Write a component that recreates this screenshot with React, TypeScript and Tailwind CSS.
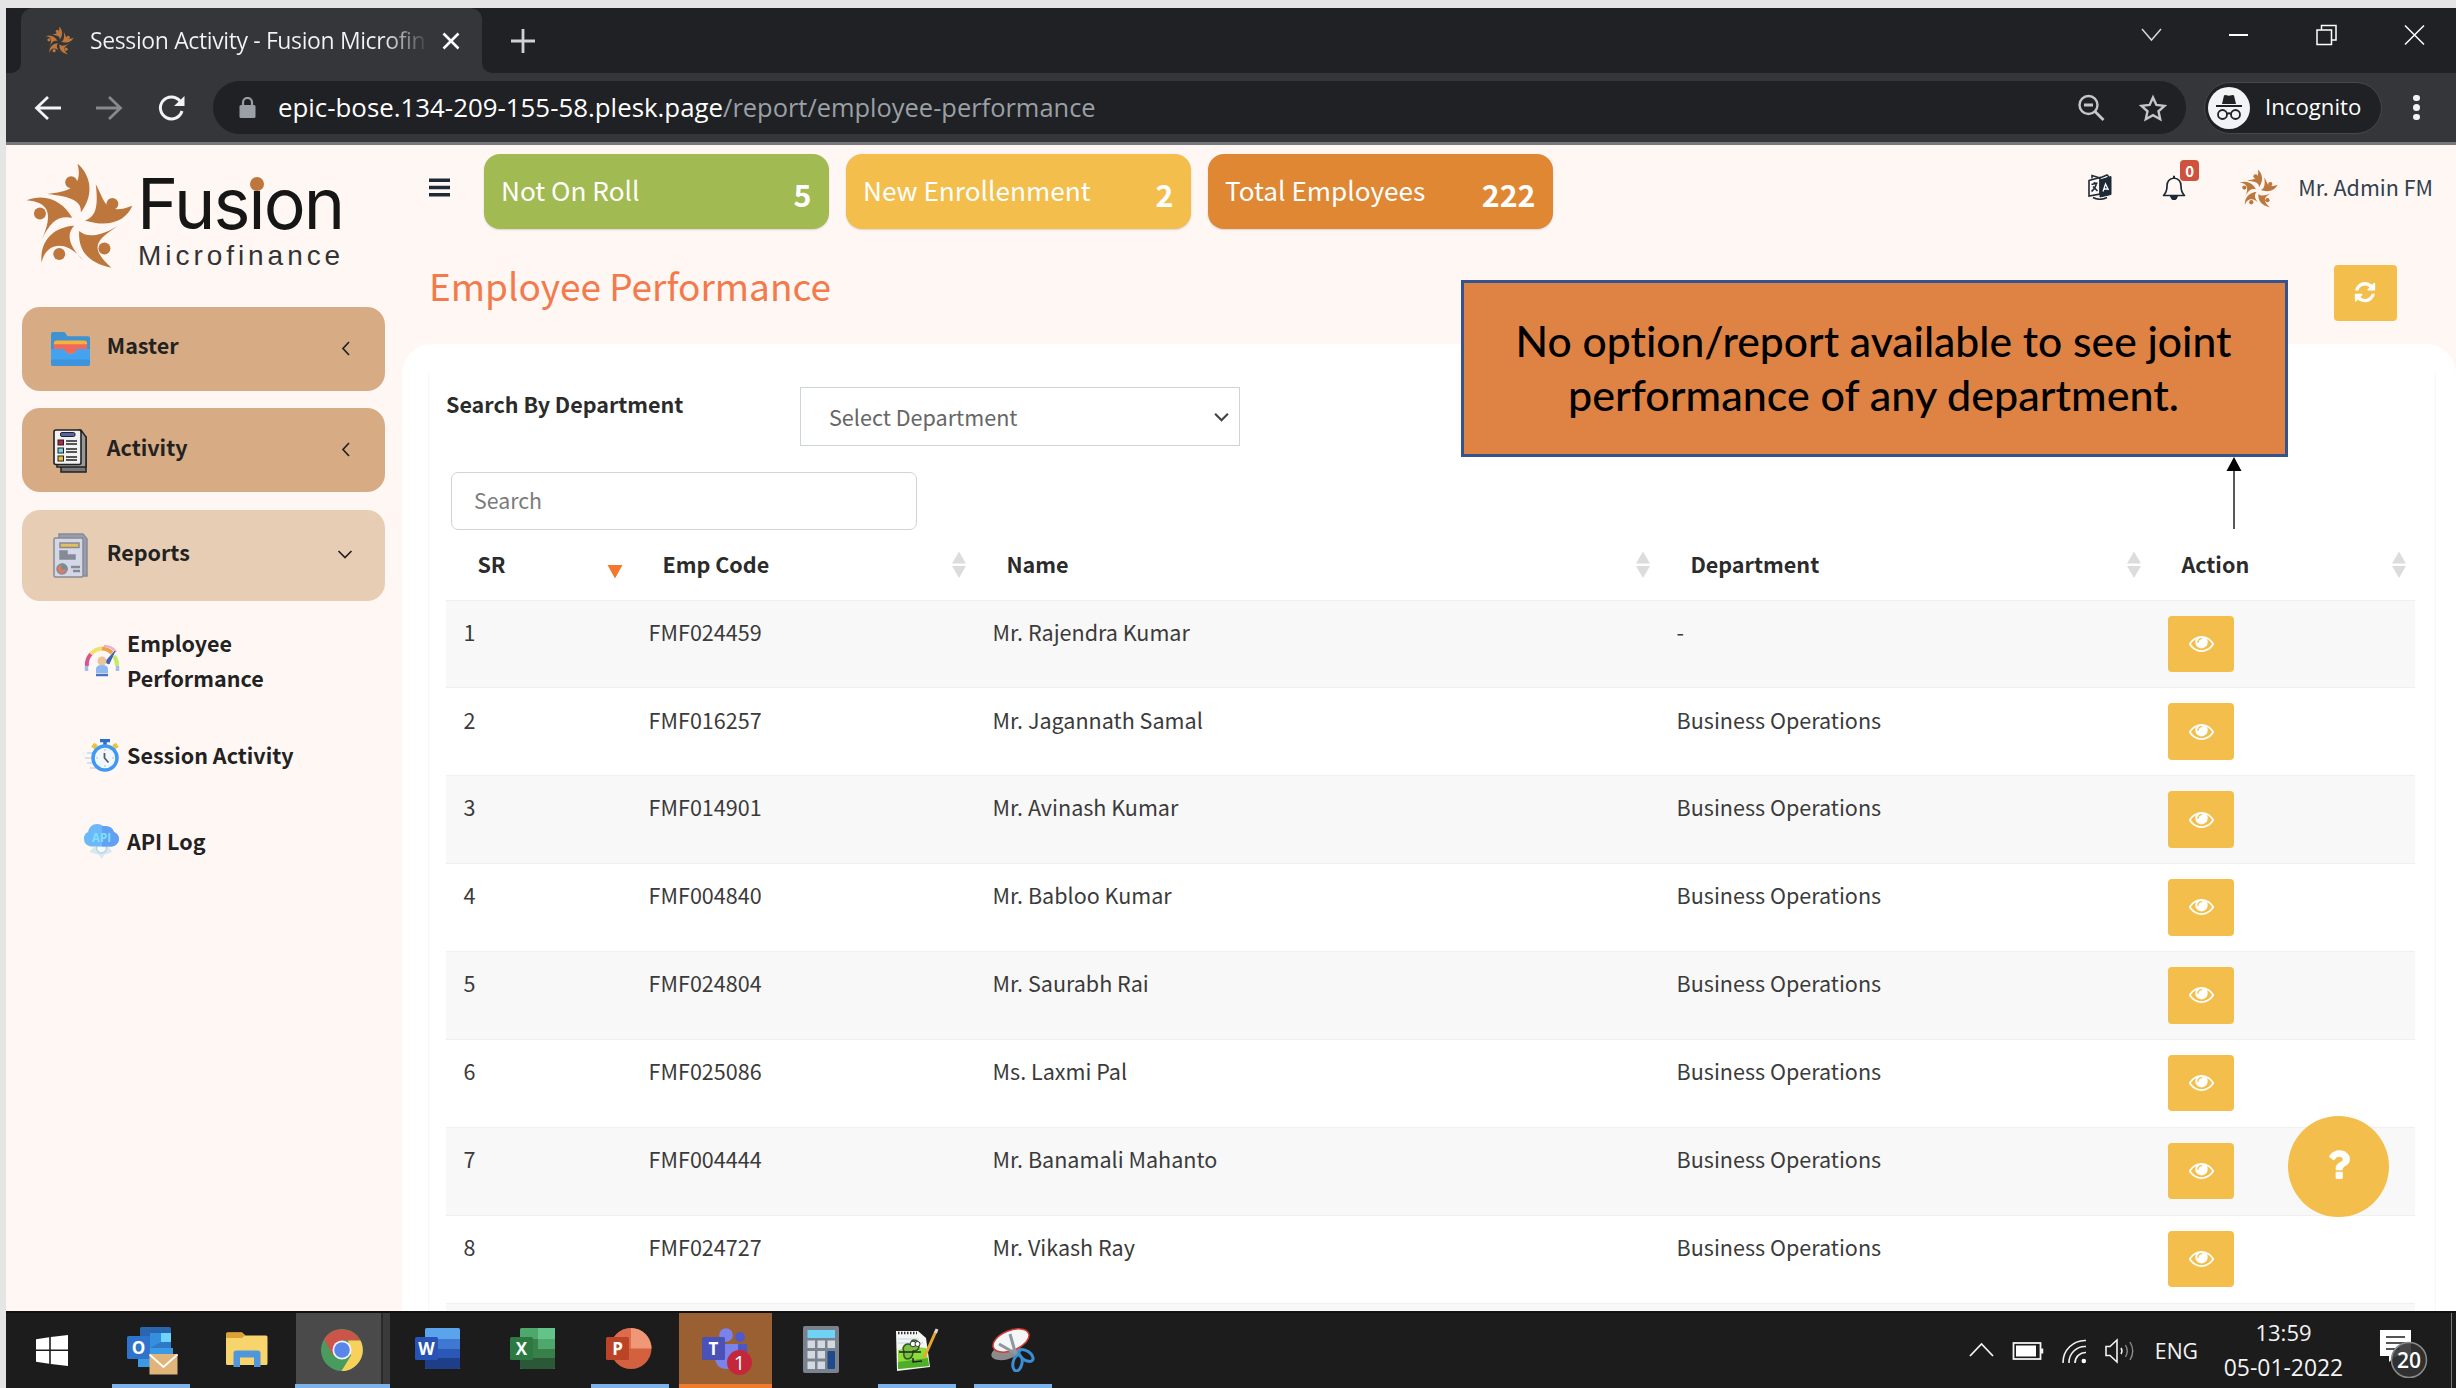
import type { ReactNode } from "react";

const SANS = "font-['Noto_Sans_CJK_SC',sans-serif]";
const UI = "font-['Open_Sans',sans-serif]";

/* ---------- shared artwork ---------- */

function FusionMark({ className }: { className: string }) {
  return (
    <svg className={className} viewBox="45 40 328 325" preserveAspectRatio="none" fill="#bd763c">
      <circle cx="184" cy="101" r="18" />
      <circle cx="308" cy="166" r="18" />
      <circle cx="284" cy="300" r="18" />
      <circle cx="148" cy="317" r="18" />
      <circle cx="90" cy="195" r="18" />
      <path d="M203 45C236 72 260 130 213 192C216 160 190 144 112 136C170 130 222 118 203 45Z" />
      <path d="M258 108C284 150 282 206 368 172C348 220 295 238 225 216C264 206 264 160 258 108Z" />
      <path d="M322 233C272 270 228 290 305 358C240 345 204 310 208 248C232 270 275 262 322 233Z" />
      <path d="M95 343C106 284 168 268 222 338C184 300 164 262 193 232C130 235 88 280 95 343Z" />
      <path d="M50 155C112 160 134 190 95 275C120 220 145 200 187 208C160 160 110 132 50 155Z" />
    </svg>
  );
}

function Eye() {
  return (
    <svg className="h-[16px] w-[25px]" viewBox="0 384 1792 1152" fill="#fff">
      <path d="M1664 960q-152-236-381-353 61 104 61 225 0 185-131.5 316.5t-316.5 131.5-316.5-131.5-131.5-316.5q0-121 61-225-229 117-381 353 133 205 333.5 326.5t434.5 121.5 434.5-121.5 333.5-326.5zm-720-384q0-20-14-34t-34-14q-125 0-214.5 89.5t-89.5 214.5q0 20 14 34t34 14 34-14 14-34q0-86 61-147t147-61q20 0 34-14t14-34zm848 384q0 34-20 69-140 230-376.5 368.5t-499.5 138.5-499.5-139-376.5-368q-20-35-20-69t20-69q140-229 376.5-368t499.5-139 499.5 139 376.5 368q20 35 20 69z" />
    </svg>
  );
}

/* ---------- browser chrome ---------- */

function TabStrip() {
  return (
    <div className="flex h-[65px] shrink-0 items-stretch bg-[#202124]">
      <div className="flex w-[15px] items-end bg-[#35363a]">
        <div className="h-full w-full rounded-br-[10px] bg-[#202124]" />
      </div>
      <div className="bg-[#202124]">
        <div className={`flex h-full w-[461px] items-center rounded-t-[12px] bg-[#35363a] pl-[24px] text-[23px] tracking-[-0.380px] text-[#f1f3f4] ${UI}`}>
          <FusionMark className="h-[29px] w-[29px]" />
          <span className="mb-[1px] ml-[16px] w-[334px] overflow-hidden whitespace-nowrap bg-[linear-gradient(90deg,#f1f3f4_88%,#4a4b4f_100%)] bg-clip-text leading-[34px] text-transparent">
            Session Activity - Fusion Microfin
          </span>
          <svg className="ml-[18px] h-[18px] w-[18px]" viewBox="0 0 18 18" stroke="#fff" strokeWidth="2.6">
            <path d="M1.500 1.500L16.500 16.500M16.500 1.500L1.500 16.500" />
          </svg>
        </div>
      </div>
      <div className="w-[13px] bg-[#35363a]">
        <div className="h-full w-full rounded-bl-[10px] bg-[#202124]" />
      </div>
      <div className="flex flex-1 items-center pl-[16px]">
        <svg className="h-[24px] w-[24px]" viewBox="0 0 24 24" stroke="#cfd1d3" strokeWidth="2.800">
          <path d="M12 0V24M0 12H24" />
        </svg>
        <svg className="mb-[11px] ml-auto mr-[31px] h-[22px] w-[284px]" viewBox="0 0 284 22" fill="none" stroke="#fff" strokeWidth="1.500">
          <path d="M1 5L10.500 16L20 5" stroke="#d5d6d8" />
          <path d="M88 11H107" strokeWidth="2" />
          <path d="M176 6H190.500V20.500H176ZM180.500 6V1.500H195V16H190.500" />
          <path d="M264 1.500L283 20.500M283 1.500L264 20.500" />
        </svg>
      </div>
    </div>
  );
}

function AddressBar() {
  return (
    <div className={`flex h-[69px] shrink-0 items-center bg-[#35363a] ${UI}`}>
      <svg className="ml-[28px] h-[28px] w-[152px]" viewBox="0 0 152 28" fill="none" strokeWidth="2.800">
        <path d="M27 14H3M14 3L2.500 14L14 25" stroke="#f1f3f4" />
        <path d="M62 14H86M75 3L86.500 14L75 25" stroke="#87898c" />
        <path d="M146 7A11 11 0 1 0 148 17" stroke="#f1f3f4" strokeWidth="3" />
        <path d="M150.500 2V12H140Z" fill="#f1f3f4" />
      </svg>
      <div className="ml-[27px] flex h-[53px] w-[1973px] items-center rounded-full bg-[#202124] pl-[26px]">
        <svg className="h-[22px] w-[17px]" viewBox="0 0 17 22">
          <rect x="0.500" y="8" width="16" height="13" rx="1.500" fill="#9aa0a6" />
          <path d="M4 9V5.500A4.500 4.500 0 0 1 13 5.500V9" fill="none" stroke="#9aa0a6" strokeWidth="2.200" />
        </svg>
        <span className="mb-[1px] ml-[22px] whitespace-nowrap text-[25.850px] leading-[34px] text-white">epic-bose.134-209-155-58.plesk.page</span>
        <span className="mb-[1px] whitespace-nowrap text-[25.450px] leading-[34px] text-[#9aa0a6]">/report/employee-performance</span>
        <svg className="ml-auto h-[28px] w-[90px]" viewBox="0 0 90 28" fill="none" stroke="#c4c7ca" strokeWidth="2.400">
          <circle cx="11.500" cy="11" r="9" />
          <path d="M7 11H16M18 17.500L26.500 26" strokeWidth="2.800" />
          <path d="M76 3.500L79.400 11L87.500 11.900L81.500 17.300L83.200 25.200L76 21.200L68.800 25.200L70.500 17.300L64.500 11.900L72.600 11Z" />
        </svg>
        <div className="w-[19px]" />
      </div>
      <div className="ml-[18px] flex h-[52px] w-[178px] items-center rounded-full border border-[#46474b] bg-[#202124] pl-[3px]">
        <svg className="h-[42px] w-[42px]" viewBox="0 0 42 42">
          <circle cx="21" cy="21" r="21" fill="#f1f3f4" />
          <path d="M14 17L16 8.500Q17 7.500 18.500 8.300Q21 9.200 23.500 8.300Q25 7.500 26 8.500L28 17Z" fill="#202124" />
          <path d="M8 19H34" stroke="#202124" strokeWidth="2" />
          <g fill="none" stroke="#202124" strokeWidth="1.800">
            <circle cx="14.500" cy="27.500" r="4.500" />
            <circle cx="27.500" cy="27.500" r="4.500" />
            <path d="M19 27Q21 25.500 23 27" />
          </g>
        </svg>
        <span className="mb-[2px] ml-[15px] text-[22.200px] leading-[30px] text-white">Incognito</span>
      </div>
      <div className="ml-[31px] flex flex-col gap-[3px]">
        <i className="h-[6.500px] w-[6.500px] rounded-full bg-[#f1f3f4]" />
        <i className="h-[6.500px] w-[6.500px] rounded-full bg-[#f1f3f4]" />
        <i className="h-[6.500px] w-[6.500px] rounded-full bg-[#f1f3f4]" />
      </div>
    </div>
  );
}

/* ---------- sidebar ---------- */

function Brand() {
  return (
    <div className="flex h-[162px] pl-[19px] pt-[17px]">
      <FusionMark className="h-[108px] w-[109px]" />
      <div className="ml-[3px] flex flex-col pt-[4px] text-[#161616]">
        <div className="flex h-[76px] font-['Inter',sans-serif] text-[70px] leading-[75px] tracking-[-1.900px]">
          <span>Fus</span>
          <span className="relative">
            <span>ı</span>
            <i className="absolute left-[1px] top-[11px] h-[14px] w-[14px] rounded-full bg-[#bd763c]" />
          </span>
          <span>on</span>
        </div>
        <span className="mt-[-3px] pl-[1px] font-['Liberation_Sans',sans-serif] text-[28px] leading-[34px] tracking-[3.950px] text-[#333]">Microfinance</span>
      </div>
    </div>
  );
}

const FolderIcon = (
  <svg className="h-[34px] w-[39px]" viewBox="0 0 40 36" preserveAspectRatio="none">
    <path d="M0 2Q0 0 2 0H13Q14.500 0 15.500 2.500L17 4.500H38Q40 4.500 40 6.500V20H0Z" fill="#3f93d3" />
    <path d="M3 12Q3 9 6 9H34Q37 9 37 12V16H3Z" fill="#f7b23c" />
    <path d="M3 13H37V20H3Z" fill="#ef6a5c" />
    <path d="M0 18H13Q16 23 20 23Q24 23 27 18H40V34Q40 36 38 36H2Q0 36 0 34Z" fill="#45a2ef" />
    <path d="M13 17H27Q25 23 20 23Q15 23 13 17Z" fill="#ef6a5c" />
    <path d="M0 29H40V34Q40 36 38 36H2Q0 36 0 34Z" fill="#3d94dc" />
  </svg>
);

const ActivityIcon = (
  <svg className="mt-[2px] h-[44px] w-[34px]" viewBox="0 0 34 44" stroke="#222">
    <path d="M8 42V8H33V43H8Z" fill="#777" strokeWidth="1.500" />
    <path d="M4 38V4L28 1L33 8V38Z" fill="#999" strokeWidth="1.500" />
    <rect x="1" y="1" width="27" height="34.500" rx="2" fill="#f1f1f1" strokeWidth="1.600" />
    <rect x="7.500" y="3.500" width="14.500" height="4" rx="1.500" fill="#5a62a8" />
    <rect x="5" y="11" width="5.500" height="5" fill="#b5204b" />
    <rect x="5" y="19" width="5.500" height="5" fill="#7ed0e6" />
    <rect x="5" y="27" width="5.500" height="5" fill="#e9bd32" />
    <path d="M13 12H24M13 15H24M13 20H24M13 23H24M13 28H24M13 31H24" strokeWidth="1.500" />
  </svg>
);

const ReportsIcon = (
  <svg className="h-[45px] w-[35px]" viewBox="0 0 35 45" stroke="#868996" strokeWidth="1.500">
    <path d="M6 6V1H30L34 6V43H6Z" fill="#9a9dab" />
    <rect x="1" y="5" width="29" height="39" rx="1.500" fill="#d4d8e6" />
    <rect x="7" y="10" width="19" height="4.500" fill="#e4bf5b" />
    <path d="M7 18H14V22H22V26H7Z" fill="#868996" />
    <circle cx="9" cy="36" r="5" fill="#de7b62" />
    <path d="M9 36V31A5 5 0 0 1 14 36Z" fill="#4ca08e" />
    <path d="M18 34H27M20 38H27" strokeWidth="2.500" />
  </svg>
);

function MenuItem({ label, icon, box, text, open }: { label: string; icon: ReactNode; box: string; text: string; open?: boolean }) {
  return (
    <div className={`flex w-[363px] items-center rounded-[18px] pl-[28px] ${box}`}>
      <div className="flex w-[40px] justify-center">{icon}</div>
      <span className={`ml-[16.500px] text-[21.500px] font-bold leading-[32px] text-[#222] ${text}`}>{label}</span>
      <svg className={`ml-auto h-[16px] w-[16px] ${open ? "mb-[4px] mr-[32px]" : "mb-[2px] mr-[31px]"}`} viewBox="0 0 16 16" fill="none" stroke="#222" strokeWidth="1.700">
        {open ? <path d="M1.500 5L8 11.500L14.500 5" /> : <path d="M11 2L5 8.500L11 15" />}
      </svg>
    </div>
  );
}

const GaugeIcon = (
  <svg className="h-[33px] w-[36px]" viewBox="0 0 36 33" fill="none">
    <g strokeWidth="4">
      <path d="M3 22A15 15 0 0 1 7 10" stroke="#d8568e" />
      <path d="M7 10A15 15 0 0 1 18 4.500" stroke="#f3e06b" />
      <path d="M18 4.500A15 15 0 0 1 28 9" stroke="#e8a24e" />
      <path d="M30 12A15 15 0 0 1 33 22" stroke="#c4ea63" />
    </g>
    <path d="M20 2Q28 2 32 8" stroke="#eeb0c4" strokeWidth="2.500" />
    <path d="M2.500 22V27M33.500 22V27" stroke="#a6bce8" strokeWidth="3.500" />
    <path d="M31 7L25 20L21 18Z" fill="#3f62b4" stroke="#3f62b4" />
    <circle cx="18" cy="17" r="4.500" fill="#eac59a" />
    <path d="M12 29V25Q12 21 18 21Q24 21 24 25V29Z" fill="#8fb8f3" />
    <path d="M12 31H24" stroke="#4a72c4" strokeWidth="2.500" />
  </svg>
);

const StopwatchIcon = (
  <svg className="h-[33px] w-[35px]" viewBox="0 0 35 33" fill="none">
    <path d="M3 14H10M1 19H8M3 24H10M6 29H12" stroke="#d5e2ee" strokeWidth="2" />
    <path d="M9 9L12 5M33 9L30 5" stroke="#eac33d" strokeWidth="4.500" />
    <path d="M16 1.500H26M21 1.500V7" stroke="#2b6fca" strokeWidth="3.500" />
    <circle cx="21" cy="19" r="12" fill="#f2f7fc" stroke="#3f98f2" strokeWidth="3.500" />
    <path d="M20.500 14V19L24.500 23.500" stroke="#55606e" strokeWidth="1.800" />
    <path d="M21 10V12M21 26V28M12 19H14M28 19H30" stroke="#b5c6d8" strokeWidth="1.200" />
  </svg>
);

const ApiIcon = (
  <svg className="h-[35px] w-[35px]" viewBox="0 0 35 35">
    <path d="M10 23H25L28 28L20 31L18 35L15 31L5 28Z" fill="#d9e8f0" />
    <circle cx="17.500" cy="24" r="5" fill="#f5f9fb" stroke="#b9d3e4" strokeWidth="1.500" />
    <path d="M7 22.500Q0 21 0 15Q0 9.500 4 8Q6 0 13 0Q17 0 19 2Q28 1 30 8Q35 10 35 15.500Q34 21.500 28 22.500Z" fill="#6cb8f8" />
    <path d="M18 2Q28 1 30 8Q35 10 35 15.500Q34 21.500 28 22.500H18Z" fill="#62a0f5" />
    <text x="17.500" y="18" textAnchor="middle" fontFamily="Open Sans" fontWeight="700" fontSize="11.500" fill="#7fe0fa">API</text>
  </svg>
);

function SubItem({ icon, children, box }: { icon: ReactNode; children: ReactNode; box: string }) {
  return (
    <div className={`flex items-center pl-[78px] ${box}`}>
      <div className="w-[35px]">{icon}</div>
      <span className="ml-[8px] text-[21.500px] font-bold leading-[34.300px] text-[#222]">{children}</span>
    </div>
  );
}

function Sidebar() {
  return (
    <aside className="flex w-[396px] shrink-0 flex-col">
      <Brand />
      <nav className="flex flex-col pl-[16.300px]">
        <MenuItem label="Master" icon={FolderIcon} text="pb-[9px]" box="h-[84px] bg-[#d7ab84]" />
        <MenuItem label="Activity" icon={ActivityIcon} text="pb-[6px]" box="mt-[17px] h-[84px] bg-[#d7ab84]" />
        <MenuItem label="Reports" icon={ReportsIcon} text="pb-[7px]" box="mt-[18px] h-[91px] bg-[#e8cdb5]" open />
      </nav>
      <SubItem icon={GaugeIcon} box="mt-[25px] h-[69px]">Employee<br />Performance</SubItem>
      <SubItem icon={StopwatchIcon} box="mt-[43px] h-[35px]">Session Activity</SubItem>
      <SubItem icon={ApiIcon} box="mt-[51px] h-[35px]">API Log</SubItem>
    </aside>
  );
}

/* ---------- header ---------- */

function StatCard({ label, value, color }: { label: string; value: string; color: string }) {
  return (
    <div className={`flex h-[75.500px] w-[345px] justify-between rounded-[16px] pl-[17px] pr-[17.500px] text-white shadow-[0_1px_2px_rgba(0,0,0,0.150)] ${color}`}>
      <span className="pt-[18px] text-[26.200px] leading-[36px]">{label}</span>
      <span className="pt-[22px] text-[30.400px] font-bold leading-[36px]">{value}</span>
    </div>
  );
}

function TopBar() {
  return (
    <header className="flex h-[93px] shrink-0 items-start">
      <svg className="ml-[27px] mt-[33px] h-[19px] w-[21px]" viewBox="0 0 21 19" fill="#1d2a36">
        <path d="M0 0.500H21V4H0ZM0 7.700H21V11.200H0ZM0 15H21V18.500H0Z" />
      </svg>
      <div className="ml-[34px] mt-[8.500px] flex gap-[17px]">
        <StatCard label="Not On Roll" value="5" color="bg-[#a1ba52]" />
        <StatCard label="New Enrollenment" value="2" color="bg-[#f4be4c]" />
        <StatCard label="Total Employees" value="222" color="bg-[#df8733]" />
      </div>
      <svg className="ml-auto mt-[29px] h-[26px] w-[24px]" viewBox="0 0 24 26" fill="none" stroke="#1d2a36">
        <path d="M12 6L23 2.500V20.500L12 23Z" fill="#1d2a36" />
        <path d="M1 6.500L12 3.500V20L1 22Z" strokeWidth="1.600" />
        <path d="M4 4.500V1.500L12 4L19 1L21 3" strokeWidth="1.500" />
        <path d="M3.500 10.500L9.500 9M6.500 8V10M8.500 10Q7 15 3.500 17.500M5 12.500L9.500 17" strokeWidth="1.600" />
        <path d="M15 17.500L17.500 10L20.500 16M16 15H19.500" stroke="#fff" strokeWidth="1.300" />
        <path d="M5 23.500Q12 27 19 23.500" strokeWidth="1.600" />
      </svg>
      <div className="relative ml-[50px] mt-[30px]">
        <svg className="h-[25px] w-[24px]" viewBox="0 0 24 25" fill="none" stroke="#1d2a36" strokeWidth="1.700">
          <path d="M1.500 20.500Q5 17 5 11Q5 4 12 3Q19 4 19 11Q19 17 22.500 20.500Z" strokeLinejoin="round" />
          <path d="M12 3V0.800" strokeWidth="2" />
          <path d="M9 21.500Q10 24.500 12 24.500Q14 24.500 15 21.500Z" fill="#1d2a36" />
        </svg>
        <span className="absolute left-[18px] top-[-15px] flex h-[21px] w-[19px] items-center justify-center rounded-[4px] bg-[#cf523f] text-[15px] font-bold leading-[20px] text-white">0</span>
      </div>
      <FusionMark className="ml-[53px] mt-[24px] h-[39px] w-[39px]" />
      <span className="ml-[20px] mr-[23px] mt-[26px] text-[21.500px] leading-[32px] text-[#33404d]">Mr. Admin FM</span>
    </header>
  );
}

/* ---------- table ---------- */

const employees = [
  ["1", "FMF024459", "Mr. Rajendra Kumar", "-"],
  ["2", "FMF016257", "Mr. Jagannath Samal", "Business Operations"],
  ["3", "FMF014901", "Mr. Avinash Kumar", "Business Operations"],
  ["4", "FMF004840", "Mr. Babloo Kumar", "Business Operations"],
  ["5", "FMF024804", "Mr. Saurabh Rai", "Business Operations"],
  ["6", "FMF025086", "Ms. Laxmi Pal", "Business Operations"],
  ["7", "FMF004444", "Mr. Banamali Mahanto", "Business Operations"],
  ["8", "FMF024727", "Mr. Vikash Ray", "Business Operations"],
];

const GRID = "grid grid-cols-[185px_344px_684px_491px_265px]";

function Sorter({ active }: { active?: boolean }) {
  return (
    <svg className="mr-[8px] h-[28px] w-[16px]" viewBox="0 0 16 28">
      {active ? (
        <path d="M0.500 14H15.500L8 27.500Z" fill="#f4772c" />
      ) : (
        <path d="M1 12.500H15L8 0.500ZM1 15H15L8 27Z" fill="#dcdcdc" />
      )}
    </svg>
  );
}

function EmployeeTable() {
  return (
    <div className="mt-[2px]">
      <div className={`h-[67.500px] text-[21.550px] font-bold leading-[34px] text-[#2b2b2b] ${GRID}`}>
        {["SR", "Emp Code", "Name", "Department", "Action"].map((h, i) => (
          <div key={h} className="flex items-start justify-between pl-[31.400px] pt-[14.700px]">
            <span>{h}</span>
            <div className="pt-[4.500px]"><Sorter active={i === 0} /></div>
          </div>
        ))}
      </div>
      {employees.map((row, i) => (
        <div key={row[0]} className={`h-[87.900px] border-t border-[#efefef] text-[21.550px] leading-[34px] text-[#3b3b3b] ${GRID} ${i % 2 ? "bg-white" : "bg-[#f8f8f8]"}`}>
          {row.map((cell, c) => (
            <span key={c} className="pl-[17.600px] pt-[14.200px]">{cell}</span>
          ))}
          <div className="pl-[18px] pt-[15px]">
            <button className="flex h-[56.500px] w-[66px] items-center justify-center rounded-[4px] bg-[#f4be4c]"><Eye /></button>
          </div>
        </div>
      ))}
      <div className="h-[20px] border-t border-[#efefef] bg-[#f8f8f8]" />
    </div>
  );
}

function Main() {
  return (
    <main className="flex min-w-0 flex-1 flex-col">
      <TopBar />
      <div className="flex h-[106px] shrink-0 items-start justify-between pl-[27px] pr-[59.500px]">
        <h1 className="pt-[23.500px] text-[37px] leading-[46px] text-[#f27a4b]">Employee Performance</h1>
        <button className="mt-[27px] flex h-[56px] w-[63px] items-center justify-center rounded-[4px] bg-[#f4be4c]">
          <svg className="h-[22px] w-[22px]" viewBox="0 0 1536 1664" fill="#fff">
            <path d="M1511 928q0 5-1 7-64 268-268 434.500t-478 166.500q-146 0-282.500-55t-243.500-157l-129 129q-19 19-45 19t-45-19-19-45v-448q0-26 19-45t45-19h448q26 0 45 19t19 45-19 45l-137 137q71 66 161 102t187 36q134 0 250-65t186-179q11-17 53-117 8-23 30-23h192q13 0 22.500 9.500t9.500 22.500zm25-800v448q0 26-19 45t-45 19h-448q-26 0-45-19t-19-45 19-45l138-138q-148-137-349-137-134 0-250 65t-186 179q-11 17-53 117-8 23-30 23h-199q-13 0-22.500-9.500t-9.500-22.500v-7q65-268 270-434.500t480-166.500q146 0 284 55.500t245 156.500l130-129q19-19 45-19t45 19 19 45z" />
          </svg>
        </button>
      </div>
      <section className="min-h-0 flex-1 overflow-hidden rounded-t-[30px] bg-white pl-[26px] pr-[20px] pt-[28px]">
        <div className="h-full border-x border-[#f7f7f7] pl-[17px] pr-[20px] pt-[15px]">
          <div className="flex h-[59px] items-start">
            <span className="w-[353.500px] text-[21.500px] font-bold leading-[34px] text-[#2b2b2b]">Search By Department</span>
            <div className="flex h-[59px] w-[440.500px] items-center justify-between border border-[#cfd4da] pl-[28.500px] pr-[9px] text-[21.600px] text-[#666]">
              <span className="leading-[34px]">Select Department</span>
              <svg className="mt-[2px] h-[11px] w-[17px]" viewBox="0 0 17 12" fill="none" stroke="#444" strokeWidth="2.400"><path d="M1.500 2L8.500 9L15.500 2" /></svg>
            </div>
          </div>
          <div className="ml-[5px] mt-[26px] flex h-[58px] w-[466px] items-center rounded-[7px] border border-[#cfd4da] pb-[2px] pl-[22px] text-[21.300px] leading-[34px] text-[#7b7b7b]">Search</div>
          <EmployeeTable />
        </div>
      </section>
    </main>
  );
}

/* ---------- taskbar ---------- */

function OfficeTile({ letter, fill, children }: { letter: string; fill: string; children: ReactNode }) {
  return (
    <svg className="ml-[3px] mt-[4px] h-[50px] w-[52px]" viewBox="0 0 52 50">
      {children}
      <rect x="1" y="11" width="23" height="23" rx="1.500" fill={fill} />
      <text x="12.500" y="29" textAnchor="middle" fontFamily="Open Sans" fontWeight="700" fontSize="17" fill="#fff">{letter}</text>
    </svg>
  );
}

function Slot({ children, line, active, alert }: { children: ReactNode; line?: boolean; active?: boolean; alert?: boolean }) {
  return (
    <div className={`flex w-[95.750px] flex-col items-center ${alert ? "border-x border-[#1c1c1c] bg-[#9b6032]" : ""} ${active ? "bg-[linear-gradient(90deg,#1c1c1c_1px,#4a4a4a_1px,#4a4a4a_86px,#2a2a2a_86px,#2a2a2a_88px,#3a3a3a_88px)]" : ""}`}>
      <div className="flex flex-1 items-center">{children}</div>
      {line && <div className="h-[4px] w-[78px] bg-[#7db3ea]" />}
      {active && <div className="h-[4px] w-full bg-[#7db3ea]" />}
      {alert && <div className="h-[4px] w-full bg-[#ee7b2e]" />}
      {!line && !active && !alert && <div className="h-[4px]" />}
    </div>
  );
}

function Taskbar() {
  return (
    <footer className={`flex h-[77px] shrink-0 border-t-[2px] border-[#111] bg-[#1c1c1c] ${UI}`}>
      <div className="flex w-[97px] items-center justify-center">
        <svg className="mb-[1px] mr-[6px] h-[31px] w-[32px]" viewBox="0 0 32 31" fill="#fff">
          <path d="M0 4.200L13.200 2.200V14.500H0ZM14.800 2L32 0V14.500H14.800ZM0 16H13.200V28.800L0 26.800ZM14.800 16H32V31L14.800 29Z" />
        </svg>
      </div>
      <Slot line>
        <svg className="ml-[4px] mt-[4px] h-[50px] w-[54px]" viewBox="0 0 54 50">
          <rect x="14" y="1" width="31" height="26" rx="1.500" fill="#2a66b0" />
          <path d="M24 7H35V16H24ZM24 16H35V24H24Z" fill="#3490dd" />
          <path d="M35 7H45V16H35Z" fill="#6fd3fb" />
          <path d="M35 16H45V27H24V22Z" fill="#2f78c9" />
          <path d="M12 22L47 22V41H12Z" fill="#3a9be4" />
          <rect x="1" y="10" width="23" height="23" rx="1.500" fill="#2f73cd" />
          <text x="12.500" y="28" textAnchor="middle" fontFamily="Open Sans" fontWeight="700" fontSize="17" fill="#fff">O</text>
          <rect x="23.500" y="28" width="28" height="20.500" fill="#e1b57a" />
          <path d="M23.500 28.500L37.500 41L51.500 28.500" fill="none" stroke="#fff" strokeWidth="1.800" />
        </svg>
      </Slot>
      <Slot>
        <svg className="mt-[2px] h-[36px] w-[42px]" viewBox="0 0 42 36">
          <path d="M0 2Q0 0.500 1.500 0.500H16L19.500 3.500H40Q41.500 3.500 41.500 5V31.500Q41.500 33 40 33H1.500Q0 33 0 31.500Z" fill="#f8d56c" />
          <path d="M0 2Q0 0.500 1.500 0.500H16L19 3.500L16 6H0Z" fill="#dca035" />
          <path d="M7.500 35V21.500Q7.500 18.500 10.500 18.500H31.500Q34.500 18.500 34.500 21.500V35H28V25.500H14V35Z" fill="#4f96da" />
        </svg>
      </Slot>
      <Slot active>
        <svg className="mt-[2px] h-[42px] w-[42px]" viewBox="0 0 42 42">
          <circle cx="21" cy="21" r="21" fill="#4a9c5e" />
          <path d="M3 10.500A21 21 0 0 1 39.500 11.500H21L12 26.500Z" fill="#cb5548" />
          <path d="M39.500 11.500A21 21 0 0 1 20.500 42L30 26.500L27 11.500Z" fill="#f7d15c" />
          <circle cx="21" cy="21" r="9.500" fill="#f3f5f8" />
          <circle cx="21" cy="21" r="7.800" fill="#5a86ec" />
        </svg>
      </Slot>
      <Slot>
        <OfficeTile letter="W" fill="#2653b4">
          <rect x="11" y="2" width="35" height="41" rx="1.500" fill="#5ba3ea" />
          <path d="M11 13H46V43H11Z" fill="#3f78d0" />
          <path d="M11 23H46V43H11Z" fill="#2a58b6" />
          <path d="M11 32H46V41.500L44.500 43H12.500L11 41.500Z" fill="#1f3e89" />
        </OfficeTile>
      </Slot>
      <Slot>
        <OfficeTile letter="X" fill="#2c7a42">
          <rect x="11" y="2" width="35" height="41" rx="1.500" fill="#4fa86b" />
          <path d="M29 2H46V13H29Z" fill="#64c389" />
          <path d="M11 13H29V32H11ZM29 23H46V32H29Z" fill="#387f49" />
          <path d="M11 32H46V41.500L44.500 43H12.500L11 41.500Z" fill="#2b5938" />
        </OfficeTile>
      </Slot>
      <Slot line>
        <OfficeTile letter="P" fill="#bc4426">
          <circle cx="26" cy="22.500" r="20.500" fill="#d3603f" />
          <path d="M26 2A20.500 20.500 0 0 1 46.500 22.500H26Z" fill="#f09777" />
          <path d="M26 2A20.500 20.500 0 0 0 5.500 22.500H26Z" fill="#dd6c4d" />
        </OfficeTile>
      </Slot>
      <Slot alert>
        <OfficeTile letter="T" fill="#4a51b7">
          <circle cx="25" cy="9" r="6.800" fill="#7b83eb" />
          <circle cx="39" cy="11" r="5" fill="#5059c9" />
          <path d="M30 18H46V30Q46 38 38 38H30Z" fill="#4e56c4" />
          <path d="M14 18H37V32Q37 43 26 43Q15 43 14 32Z" fill="#7b83eb" />
          <circle cx="38.500" cy="36.500" r="12.500" fill="#c4273b" />
          <text x="38.500" y="43.500" textAnchor="middle" fontFamily="Open Sans" fontSize="20" fill="#fff">1</text>
        </OfficeTile>
      </Slot>
      <Slot>
        <svg className="mt-[2px] h-[47px] w-[36px]" viewBox="0 0 36 47">
          <rect width="36" height="47" rx="2" fill="#7a838d" />
          <rect x="4.500" y="4" width="27.500" height="8" fill="#6fd3f5" />
          <path d="M4.500 14.500H12V22H4.500ZM14.500 14.500H22V22H14.500ZM24.500 14.500H32V22H24.500ZM4.500 25H12V32.500H4.500ZM14.500 25H22V32.500H14.500ZM4.500 35.500H12V43H4.500ZM14.500 35.500H22V43H14.500Z" fill="#d3d9e0" />
          <rect x="24.500" y="25" width="7.500" height="18" rx="1" fill="#1f4b8a" />
        </svg>
      </Slot>
      <Slot line>
        <svg className="mt-[2px] h-[44px] w-[44px]" viewBox="0 0 44 44">
          <path d="M1 3H23L31 10L35 39L2 43Z" fill="#f4f6f4" />
          <path d="M3 22Q15 18 31 20L34 38L3 41Z" fill="#8ddc3a" />
          <path d="M3 34L33 30L34 38L3 41Z" fill="#4fae27" />
          <path d="M3 5H22" stroke="#333" strokeWidth="2.500" strokeDasharray="1.500 1.500" />
          <path d="M3 11H24M3 15H28" stroke="#c4d3ea" strokeWidth="1" />
          <path d="M8 20Q10 14 17 17Q15 12 19 12Q24 12 24 18Q24 23 18 23Q18 31 12 31Q8 30 9 24Z" fill="#79c043" stroke="#2f5a1c" strokeWidth="1.500" />
          <circle cx="18" cy="16" r="2.800" fill="#fff" stroke="#333" />
          <circle cx="22.500" cy="16" r="2.500" fill="#fff" stroke="#333" />
          <path d="M4 24H26M18 30V34L27 33" stroke="#222" strokeWidth="1.500" fill="none" />
          <path d="M29 30L41 3" stroke="#e8a82f" strokeWidth="3" />
          <path d="M40.500 5L42 1" stroke="#d9dbe0" strokeWidth="3" />
        </svg>
      </Slot>
      <Slot line>
        <svg className="mt-[2px] h-[44px] w-[44px]" viewBox="0 0 44 44" fill="none">
          <ellipse cx="15" cy="24" rx="15" ry="7.500" transform="rotate(-14 15 24)" fill="#8b8b8b" />
          <ellipse cx="20" cy="12.500" rx="19" ry="10" transform="rotate(-22 20 12.500)" fill="#f5f6f8" stroke="#cf3a33" strokeWidth="1.500" />
          <path d="M8 16L27 27M19 6L25 27" stroke="#8f979f" strokeWidth="3" />
          <ellipse cx="35" cy="27.500" rx="8" ry="4.500" transform="rotate(35 35 27.500)" stroke="#3b8ed4" strokeWidth="3" />
          <ellipse cx="26.500" cy="35" rx="4.500" ry="8" transform="rotate(12 26.500 35)" stroke="#3b8ed4" strokeWidth="3" />
        </svg>
      </Slot>
      <div className="ml-auto flex items-center text-[#f3f3f3]">
        <svg className="h-[30px] w-[168px]" viewBox="0 0 168 30" fill="none" stroke="#f3f3f3" strokeWidth="1.800">
          <path d="M2 20L13.500 8L25 20" />
          <rect x="45.500" y="7" width="27" height="16" />
          <rect x="48" y="9.500" width="20" height="11" fill="#fff" stroke="none" />
          <path d="M74 12.500V17.500" strokeWidth="2.500" />
          <path d="M95 27A22 22 0 0 1 118 4.500M101 27A16 16 0 0 1 118 10.500M107 27A10.500 10.500 0 0 1 118 16.500" strokeWidth="1.600" />
          <circle cx="115.800" cy="25" r="2.300" fill="#fff" stroke="none" />
          <path d="M138 10.500H142L149 4V26L142 19.500H138Z" strokeWidth="1.600" />
          <path d="M153 12Q155 15 153 18" strokeWidth="1.500" />
          <path d="M157.500 9Q161 15 157.500 21M162 6Q167.500 15 162 24" stroke="#8c8c8c" strokeWidth="1.400" />
        </svg>
        <span className="ml-[19px] text-[21.200px] leading-[30px]">ENG</span>
        <div className="ml-[24.500px] mb-[2px] flex w-[122px] flex-col items-center text-[22px] leading-[36px] text-[#f3f3f3]">
          <span>13:59</span>
          <span className="text-[22.900px]">05-01-2022</span>
        </div>
        <svg className="ml-[35px] mt-[4px] h-[50px] w-[50px]" viewBox="0 0 50 50">
          <path d="M0 2H31V28H16L9 34V28H0Z" fill="#fff" />
          <path d="M6 9H25M6 15H25M6 21H20" stroke="#1c1c1c" strokeWidth="1.600" />
          <circle cx="29" cy="32" r="17.500" fill="#333" stroke="#8a8a8a" strokeWidth="1.500" fillOpacity="0.900" />
          <text x="29" y="39.500" textAnchor="middle" fontFamily="Open Sans" fontWeight="600" fontSize="21" fill="#fff">20</text>
        </svg>
        <div className="ml-[21px] mr-[4px] h-[75px] w-[1.500px] bg-[#7a7a7a]" />
      </div>
    </footer>
  );
}

/* ---------- page ---------- */

export default function App() {
  return (
    <div className={`relative flex h-[1388px] w-[2456px] flex-col overflow-hidden bg-[#e5e5e5] pl-[6px] pt-[8px] ${SANS}`}>
      <TabStrip />
      <AddressBar />
      <div className="h-[3px] shrink-0 bg-[#77787b]" />
      <div className="flex min-h-0 flex-1 bg-[#fff7f4]">
        <Sidebar />
        <Main />
      </div>
      <Taskbar />

      <div className="absolute left-[1461px] top-[280px] flex h-[177px] w-[827px] flex-col items-center border-[3px] border-[#35538f] bg-[#de8344] pt-[31px] font-['Lato',sans-serif] font-medium leading-[54px] text-black [font-variant-ligatures:none]">
        <span className="whitespace-nowrap pr-[2px] text-[42.600px]">No option/report available to see joint</span>
        <span className="whitespace-nowrap pr-[2px] text-[43.050px]">performance of any department.</span>
      </div>
      <svg className="absolute left-[2226px] top-[457px] h-[72px] w-[16px]" viewBox="0 0 16 72">
        <path d="M8 0L15.500 14H0.500Z" />
        <path d="M8 12V72" stroke="#000" strokeWidth="1.300" />
      </svg>
      <button className="absolute left-[2288px] top-[1115.500px] flex h-[101px] w-[101px] items-center justify-center rounded-full bg-[#f4be4c]">
        <svg className="mb-[4px] h-[29px] w-[23px]" viewBox="384 256 1024 1280" fill="#fff">
          <path d="M1088 1256v240q0 16-12 28t-28 12h-240q-16 0-28-12t-12-28v-240q0-16 12-28t28-12h240q16 0 28 12t12 28zm316-600q0 54-15.500 101t-35 76.500-55 59.500-57.500 43.500-61 35.500q-41 23-68.500 65t-27.500 67q0 17-12 32.500t-28 15.500h-240q-15 0-25.500-18.500t-10.500-37.500v-45q0-83 65-156.500t143-108.500q59-27 84-56t25-76q0-42-46.500-74t-107.500-32q-65 0-108 29-35 25-107 115-13 16-31 16-12 0-25-8l-164-125q-13-10-15.500-25t5.500-28q160-266 464-266 80 0 161 31t146 83 106 127.500 41 158.500z" />
        </svg>
      </button>
    </div>
  );
}
